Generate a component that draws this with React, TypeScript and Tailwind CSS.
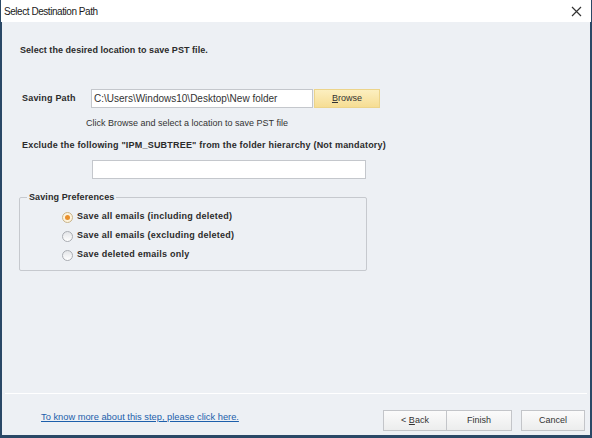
import React from 'react';

function Radio({ checked, label }: { checked?: boolean; label: string }) {
  return (
    <div className="flex items-center gap-[4px] h-[18px]">
      <span
        className={
          'w-[11px] h-[11px] rounded-full border flex items-center justify-center ' +
          (checked
            ? 'border-[#c9b48a] bg-[#fdf3dc]'
            : 'border-[#a9acb2] bg-gradient-to-b from-[#e3e5e8] to-[#ffffff]')
        }
      >
        {checked && <span className="w-[5px] h-[5px] rounded-full bg-[#e9902c]" />}
      </span>
      <span className="font-bold text-[#2b2b2b] tracking-[0.25px]">{label}</span>
    </div>
  );
}

function Button({ children, className = '' }: { children: React.ReactNode; className?: string }) {
  return (
    <div
      className={
        'h-[21px] flex items-center justify-center border border-[#c3c5c9] bg-gradient-to-b from-[#fbfbfb] to-[#eceded] text-[#333] ' +
        className
      }
    >
      {children}
    </div>
  );
}

export default function App() {
  return (
    <div className="w-[592px] h-[438px] flex flex-col bg-[#2a4866] font-['Liberation_Sans',Arial,sans-serif] text-[9px] text-[#333] overflow-hidden">
      {/* title bar */}
      <div className="h-[22px] shrink-0 bg-white ml-[1px] mr-[1px] flex items-center justify-between pl-[3px] pr-[9px]">
        <span className="text-[10px] tracking-[-0.45px] text-[#1a1a1a]">Select Destination Path</span>
        <svg width="11" height="11" viewBox="0 0 11 11" className="text-[#333]">
          <path d="M1 1 L10 10 M10 1 L1 10" stroke="currentColor" strokeWidth="1.2" />
        </svg>
      </div>

      {/* body */}
      <div className="flex-1 mx-[2px] mb-[3px] bg-[#edf0f4] flex flex-col">
        <div className="pl-[18px] pt-[22px] font-bold text-[#2b2b2b] leading-[12px] tracking-[0.05px]">
          Select the desired location to save PST file.
        </div>

        <div className="mt-[33px] flex items-center">
          <span className="w-[89px] shrink-0 pl-[20px] whitespace-nowrap font-bold text-[#2b2b2b] tracking-[0.2px]">
            Saving Path
          </span>
          <div className="w-[222px] h-[19px] bg-white border border-[#c4c7cc] flex items-center pl-[2px] text-[10px] text-[#333] whitespace-nowrap">
            C:\Users\Windows10\Desktop\New folder
          </div>
          <div className="ml-[1px] w-[66px] h-[19px] border border-[#ecd48a] bg-gradient-to-b from-[#fcefc0] to-[#f6dd93] flex items-center justify-center text-[#333]">
            <span>
              <span className="underline">B</span>rowse
            </span>
          </div>
        </div>

        <div className="mt-[9px] pl-[84px] leading-[12px] text-[#333]">
          Click Browse and select a location to save PST file
        </div>

        <div className="mt-[10px] pl-[20px] leading-[12px] font-bold text-[#2b2b2b] tracking-[0.2px]">
          Exclude the following "IPM_SUBTREE" from the folder hierarchy (Not mandatory)
        </div>

        <div className="mt-[9px] ml-[90px] w-[274px] h-[19px] bg-white border border-[#c4c7cc]" />

        <fieldset className="mt-[12px] ml-[17px] w-[348px] h-[80px] border border-[#c6c9ce] rounded-[2px] px-[6px] pt-0">
          <legend className="px-[2px] ml-[1px] font-bold text-[#2b2b2b] leading-[12px] tracking-[0.1px]">
            Saving Preferences
          </legend>
          <div className="pl-[36px] pt-[5px] flex flex-col gap-[1px]">
            <Radio checked label="Save all emails (including deleted)" />
            <Radio label="Save all emails (excluding deleted)" />
            <Radio label="Save deleted emails only" />
          </div>
        </fieldset>

        <div className="mt-auto mx-[3px] h-[1px] bg-[#d5d8dc] border-b border-white" />

        <div className="h-[41px] flex items-start">
          <a className="mt-[17px] ml-[39px] text-[9.3px] text-[#1d5fab] underline leading-[12px]">
            To know more about this step, please click here.
          </a>
          <div className="ml-auto mr-[5px] mt-[16px] flex items-center">
            <Button className="w-[64px]">
              <span>
                &lt; <span className="underline">B</span>ack
              </span>
            </Button>
            <Button className="w-[65px] border-l-0">Finish</Button>
            <Button className="w-[64px] ml-[9px]">Cancel</Button>
          </div>
        </div>
      </div>
    </div>
  );
}
